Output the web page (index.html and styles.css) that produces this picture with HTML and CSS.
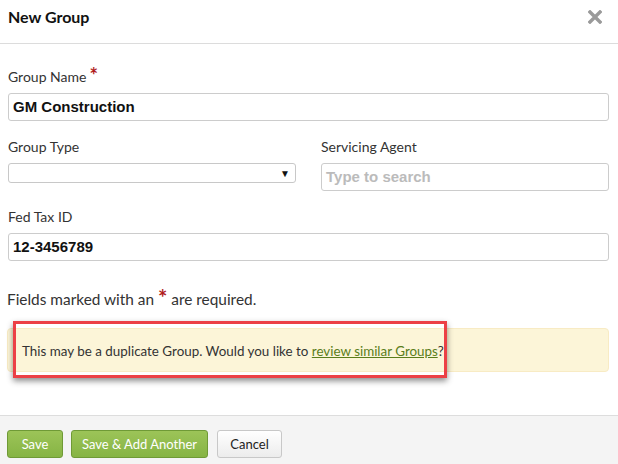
FILE: index.html
```html
<!DOCTYPE html>
<html>
<head>
<meta charset="utf-8">
<link rel="stylesheet" href="styles.css">
</head>
<body>
<div class="modal">
  <div class="header">
    <div class="title">New Group</div>
    <svg class="close" width="14" height="14" viewBox="0 0 14 14"><path d="M2 2L12 12M12 2L2 12" stroke="#9a9a9a" stroke-width="3.4" stroke-linecap="square"/></svg>
  </div>
  <div class="body">
    <div class="field">
      <div class="label">Group Name<span class="req">*</span></div>
      <div class="input">GM Construction</div>
    </div>
    <div class="row">
      <div class="field">
        <div class="label">Group Type</div>
        <div class="select"><span class="arrow">&#9660;</span></div>
      </div>
      <div class="field">
        <div class="label">Servicing Agent</div>
        <div class="input placeholder">Type to search</div>
      </div>
    </div>
    <div class="field">
      <div class="label">Fed Tax ID</div>
      <div class="input">12-3456789</div>
    </div>
    <div class="note">Fields marked with an <span class="req">*</span> are required.</div>
    <div class="alert">This may be a duplicate Group. Would you like to <a class="link">review similar Groups</a>?
      <div class="highlight"></div>
    </div>
  </div>
  <div class="footer">
    <button class="btn green">Save</button>
    <button class="btn green wide">Save &amp; Add Another</button>
    <button class="btn plain">Cancel</button>
  </div>
</div>
</body>
</html>
```
FILE: styles.css
```css
* { box-sizing: border-box; }
html, body { margin: 0; padding: 0; background: #fff; }
body { font-family: Lato, "Open Sans", sans-serif; color: #333; width: 618px; height: 464px; overflow: hidden; }
.modal { display: flex; flex-direction: column; height: 464px; }
.header { height: 44px; border-bottom: 1px solid #dcdcdc; display: flex; justify-content: space-between; align-items: flex-start; padding: 7px 16px 0 8px; }
.title { font-weight: bold; font-size: 16px; line-height: 20px; color: #111; }
.close { margin-top: 3px; }
.body { flex: 1; padding: 23px 9px 0 8px; position: relative; }
.field { margin-bottom: 16px; }
.label { font-size: 14px; line-height: 20px; margin-bottom: 6px; color: #333; }
.req { display: inline-block; color: #b01c1c; font-size: 20px; line-height: 10px; height: 10px; font-weight: bold; vertical-align: top; margin-top: 3px; }
.label .req { margin-left: 3px; }
.input { height: 28px; border: 1px solid #ccc; border-radius: 3px; font-family: "Liberation Sans", Arial, sans-serif; font-weight: bold; font-size: 15px; line-height: 26px; padding-left: 4px; color: #111; }
.input.placeholder { color: #bbb; }
.row { display: grid; grid-template-columns: 288px 288px; column-gap: 25px; }
.row .field { margin-bottom: 16px; }
.select { height: 20px; border: 1px solid #c8c8c8; border-radius: 3px; display: flex; justify-content: flex-end; align-items: center; padding-right: 5px; }
.arrow { font-size: 10px; line-height: 10px; color: #111; }
.note { font-size: 15.4px; line-height: 22px; margin-top: 27px; color: #333; margin-left: -1px; }
.note .req { font-size: 22px; margin-top: 5px; }
.alert { position: relative; margin-top: 18px; margin-left: -1px; height: 44px; background: #fcf5d8; border: 1px solid #f8ebc4; border-radius: 4px; font-size: 13.4px; line-height: 20px; padding: 12px 14px; color: #333; }
.link { color: #5a7d1a; text-decoration: underline; }
.highlight { position: absolute; left: 5px; top: -8px; width: 434px; height: 57px; border: 3px solid #ec4046; box-shadow: 0 3px 6px rgba(0,0,0,0.45); }
.footer { height: 49px; background: #f4f4f4; border-top: 1px solid #ddd; padding: 14px 0 0 7px; display: flex; align-items: flex-start; }
.btn { height: 28px; border-radius: 3px; font-family: Lato, sans-serif; font-size: 13px; padding: 0; margin: 0; cursor: pointer; }
.green { width: 56px; margin-right: 8px; background: linear-gradient(#9cc458, #86b444); border: 1px solid #6f9a36; color: #fff; }
.green.wide { width: 137px; margin-right: 9px; }
.plain { width: 65px; background: linear-gradient(#fff, #ececec); border: 1px solid #c8c8c8; color: #222; }
```
